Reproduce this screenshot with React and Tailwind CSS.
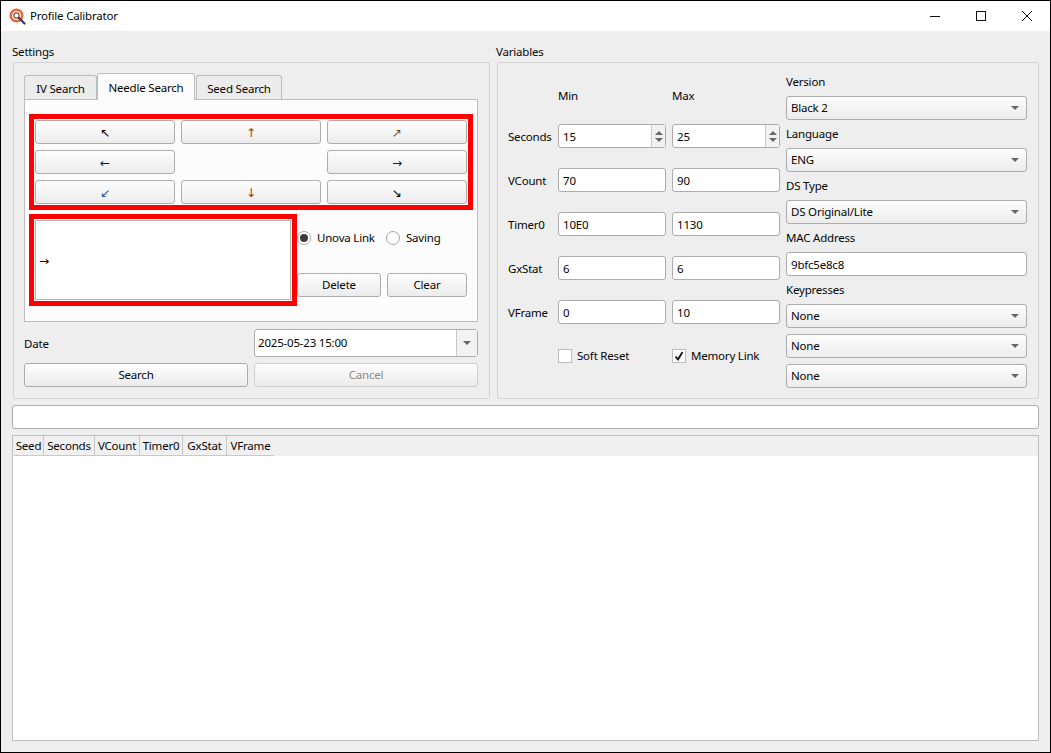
import React from "react";

const btn = "flex items-center justify-center h-6 rounded-[3px] border border-[#adadad] bg-gradient-to-b from-[#fdfdfd] to-[#ececec] text-[11.5px] text-[#050505]";
const field = "flex items-center h-6 rounded-[3px] border border-[#adadad] bg-white px-1 pt-px text-[11.5px] text-[#050505]";
const label = "text-[11.5px] leading-4 text-[#050505]";
const headCell = "flex items-center justify-center border-b border-[#c8c8c8]";

function Arrow({ glyph, color }) {
  return <button className={btn}><span className={`font-['DejaVu_Sans'] pt-px text-[12px] leading-none ${color}`}>{glyph}</span></button>;
}

function Caret() {
  return <svg width="8" height="4" viewBox="0 0 8 4"><path d="M0 0h8L4 4z" fill="#666" /></svg>;
}

function Combo({ value }) {
  return (
    <div className={`${btn} !justify-between pl-[4px] pr-[7px]`}>
      <span>{value}</span>
      <Caret />
    </div>
  );
}

function Spin({ value }) {
  return (
    <div className="flex h-6 rounded-[3px] border border-[#adadad] bg-white text-[11.5px] text-[#050505]">
      <span className="flex flex-1 items-center pl-[4px] pt-px">{value}</span>
      <span className="flex w-[14px] flex-col items-center justify-center gap-[3px] border-l border-[#c8c8c8] bg-[#f2f2f2]">
        <svg width="8" height="4" viewBox="0 0 8 4"><path d="M0 4h8L4 0z" fill="#666" /></svg>
        <svg width="8" height="4" viewBox="0 0 8 4"><path d="M0 0h8L4 4z" fill="#666" /></svg>
      </span>
    </div>
  );
}

function Check({ checked, text }) {
  return (
    <div className="flex items-center gap-[5px] text-[11.5px] text-[#050505]">
      <span className="flex h-[14px] w-[14px] items-center justify-center border border-[#bdbdbd] bg-white">
        {checked && (
          <svg width="10" height="10" viewBox="0 0 10 10"><path d="M1.5 5.5L4 8.5 8.5 1" fill="none" stroke="#111" strokeWidth="1.8" /></svg>
        )}
      </span>
      {text}
    </div>
  );
}

function Radio({ checked, text }) {
  return (
    <div className="flex items-center gap-[6px] text-[11.5px] text-[#050505]">
      <span className="flex h-[14px] w-[14px] items-center justify-center rounded-full border border-[#a8a8a8] bg-white">
        {checked && <span className="h-2 w-2 rounded-full bg-[#3c3c3c]" />}
      </span>
      {text}
    </div>
  );
}

function Logo() {
  return (
    <svg width="17" height="17" viewBox="0 0 17 17">
      <circle cx="7.5" cy="7.5" r="5.8" fill="#fff" stroke="#e8693c" strokeWidth="2.6" />
      <circle cx="7.5" cy="7.5" r="2.6" fill="none" stroke="#8a4a3a" strokeWidth="1.2" />
      <path d="M10 10l5.5 5.5" stroke="#3f3560" strokeWidth="2.2" strokeLinecap="round" />
    </svg>
  );
}

function Tab({ text, active }) {
  return active ? (
    <div className="relative z-10 -mb-px flex h-[27px] w-[98px] items-center justify-center rounded-t-[3px] border border-b-0 border-[#bdbdbd] bg-[#fcfcfc] pt-px text-[11.5px] text-[#050505]">{text}</div>
  ) : (
    <div className="flex h-6 items-center justify-center rounded-t-[3px] border border-b-0 border-[#bdbdbd] bg-[#ececec] pt-[2px] text-[11.5px] text-[#050505]">{text}</div>
  );
}

function RowLabel({ children }) {
  return <div className={`${label} flex items-center pt-px`}>{children}</div>;
}

function Stack({ title, children }) {
  return (
    <div className="flex flex-col gap-[6px]">
      <div className={label}>{title}</div>
      {children}
    </div>
  );
}

export default function App() {
  return (
    <div className="flex h-[753px] w-[1051px] flex-col overflow-hidden border border-black bg-[#eeeeee] font-['Noto_Sans','Open_Sans',sans-serif] tracking-[-0.2px]">
      {/* title bar */}
      <div className="flex h-[30px] shrink-0 items-center bg-white pl-[8px] text-[11.5px] text-[#050505]">
        <Logo />
        <span className="ml-[4px]">Profile Calibrator</span>
        <div className="ml-auto flex items-center gap-[36px] pr-[18px]">
          <svg width="10" height="1" viewBox="0 0 10 1"><path d="M0 .5h10" stroke="#111" /></svg>
          <svg width="10" height="10" viewBox="0 0 10 10"><rect x=".5" y=".5" width="9" height="9" fill="none" stroke="#111" /></svg>
          <svg width="10" height="10" viewBox="0 0 10 10"><path d="M0 0l10 10M10 0L0 10" stroke="#111" /></svg>
        </div>
      </div>

      <div className="flex flex-1 flex-col px-[11px] pt-[13px] pb-[11px]">
        <div className="flex h-[355px] gap-[6px]">
          {/* settings */}
          <div className="flex w-[478px] flex-col">
            <div className={`${label} h-[18px]`}>Settings</div>
            <div className="ml-px flex h-[337px] flex-col rounded-[2px] border border-[#d4d4d4] pl-[10px] pr-[11px] pt-[10px]">
              <div className="flex items-end">
                <div className="w-[73px]"><Tab text="IV Search" /></div>
                <Tab text="Needle Search" active />
                <div className="ml-px w-[86px]"><Tab text="Seed Search" /></div>
              </div>
              <div className="flex h-[223px] flex-col border border-[#bdbdbd] bg-[#fcfcfc] px-[4px] pt-[14px]">
                <div className="grid w-[444px] grid-cols-3 gap-[6px] border-[5px] border-[#ff0000] p-px">
                  <Arrow glyph="↖" color="text-black" />
                  <Arrow glyph="↑" color="text-[#a0401a]" />
                  <Arrow glyph="↗" color="text-[#7a5020]" />
                  <Arrow glyph="←" color="text-[#101040]" />
                  <div />
                  <Arrow glyph="→" color="text-[#102040]" />
                  <Arrow glyph="↙" color="text-[#1a5a90]" />
                  <Arrow glyph="↓" color="text-[#a02a10]" />
                  <Arrow glyph="↘" color="text-black" />
                </div>
                <div className="mt-1 flex">
                  <div className="h-[92px] w-[268px] border-[5px] border-[#ff0000] p-px">
                    <div className="flex h-full items-center border border-[#b4b4b4] bg-white pl-[3px] pt-[2px] font-['DejaVu_Sans'] text-[12px] text-black">→</div>
                  </div>
                  <div className="w-[170px] pt-[17px]">
                    <div className="flex h-[14px] items-center">
                      <div className="w-[89px]"><Radio checked text="Unova Link" /></div>
                      <Radio text="Saving" />
                    </div>
                    <div className="mt-[28px] grid grid-cols-[84px_80px] gap-[6px]">
                      <button className={btn}>Delete</button>
                      <button className={btn}>Clear</button>
                    </div>
                  </div>
                </div>
              </div>
              <div className="mt-[7px] flex h-[28px] items-center">
                <span className={`${label} w-[230px] pt-px`}>Date</span>
                <div className="flex h-[28px] flex-1 rounded-[3px] border border-[#adadad] bg-white text-[11.5px] text-[#050505]">
                  <span className="flex flex-1 items-center pl-[3px]">2025-05-23 15:00</span>
                  <span className="flex w-[21px] items-center justify-center border-l border-[#c8c8c8] bg-[#f2f2f2]"><Caret /></span>
                </div>
              </div>
              <div className="mt-[6px] grid grid-cols-2 gap-[6px]">
                <button className={btn}>Search</button>
                <button className={`${btn} !text-[#8a8a8a] !border-[#cfcfcf]`}>Cancel</button>
              </div>
            </div>
          </div>

          {/* variables */}
          <div className="flex flex-1 flex-col">
            <div className={`${label} h-[18px]`}>Variables</div>
            <div className="ml-px flex h-[337px] gap-[6px] rounded-[2px] border border-[#d4d4d4] pl-[10px] pt-[11px]">
              <div className="mt-[6px] grid w-[272px] grid-cols-[50px_108px_108px] grid-rows-[24px_24px_24px_24px_24px_24px_24px] gap-y-5 [&>*]:h-6">
                <div />
                <div className={`${label} flex items-center pt-2`}>Min</div>
                <div className={`${label} ml-[6px] flex items-center pt-2`}>Max</div>

                <RowLabel>Seconds</RowLabel>
                <Spin value="15" />
                <div className="ml-[6px] w-[108px]"><Spin value="25" /></div>

                <RowLabel>VCount</RowLabel>
                <div className={field}>70</div>
                <div className="ml-[6px] w-[108px]"><div className={field}>90</div></div>

                <RowLabel>Timer0</RowLabel>
                <div className={field}>10E0</div>
                <div className="ml-[6px] w-[108px]"><div className={field}>1130</div></div>

                <RowLabel>GxStat</RowLabel>
                <div className={field}>6</div>
                <div className="ml-[6px] w-[108px]"><div className={field}>6</div></div>

                <RowLabel>VFrame</RowLabel>
                <div className={field}>0</div>
                <div className="ml-[6px] w-[108px]"><div className={field}>10</div></div>

                <div />
                <Check text="Soft Reset" />
                <div className="ml-[6px] flex items-center"><Check checked text="Memory Link" /></div>
              </div>
              <div className="flex w-[241px] flex-col gap-[6px]">
                <Stack title="Version"><Combo value="Black 2" /></Stack>
                <Stack title="Language"><Combo value="ENG" /></Stack>
                <Stack title="DS Type"><Combo value="DS Original/Lite" /></Stack>
                <Stack title="MAC Address"><div className={field}>9bfc5e8c8</div></Stack>
                <Stack title="Keypresses"><Combo value="None" /></Stack>
                <Combo value="None" />
                <Combo value="None" />
              </div>
            </div>
          </div>
        </div>

        {/* progress */}
        <div className="mt-[6px] h-6 rounded-[3px] border border-[#adadad] bg-white" />

        {/* results */}
        <div className="mt-[6px] flex-1 border border-[#c0c0c0] bg-white">
          <div className="flex h-[20px] bg-[#f0f0f0] pl-px text-[11.5px] text-[#050505]">
            <div className={`${headCell} w-[30px] border-r`}>Seed</div>
            <div className={`${headCell} w-[51px] border-r`}>Seconds</div>
            <div className={`${headCell} w-[45px] border-r`}>VCount</div>
            <div className={`${headCell} w-[43px] border-r`}>Timer0</div>
            <div className={`${headCell} w-[44px] border-r`}>GxStat</div>
            <div className={`${headCell} w-[47px]`}>VFrame</div>
          </div>
        </div>
      </div>
    </div>
  );
}
